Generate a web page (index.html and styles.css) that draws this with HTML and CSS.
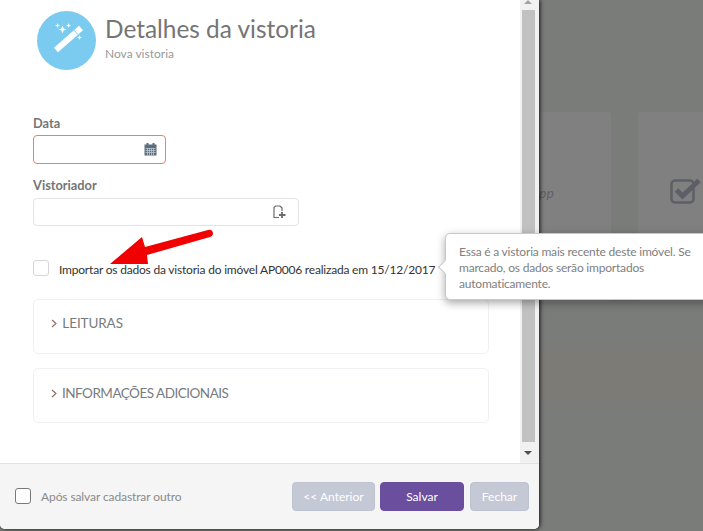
FILE: index.html
```html
<!DOCTYPE html>
<html lang="pt-BR">
<head>
    <meta charset="UTF-8">
    <meta name="viewport" content="width=device-width, initial-scale=1.0">
    <title>Detalhes da vistoria</title>
    <link rel="stylesheet" href="styles.css">
</head>
<body>
    <main class="page">
        <section class="panel">
            <div class="panel-body">
                <div class="content">
                    <header class="head">
                        <div class="head-icon">
                            <svg width="44" height="44" viewBox="0 0 44 44">
                                <path d="M9 28.750 L34 6.750 L38 11.250 L13 33.250 Z" fill="#fff"/>
                                <path d="M29 11.150 L33 15.650" stroke="#7bcbf0" stroke-width="1"/>
                                <path d="M17.500 6.500 L18.600 9.400 L21.500 10.500 L18.600 11.600 L17.500 14.500 L16.400 11.600 L13.500 10.500 L16.400 9.400 Z" fill="#fff"/>
                                <path d="M12.500 4 L13.200 5.800 L15 6.500 L13.200 7.200 L12.500 9 L11.800 7.200 L10 6.500 L11.800 5.800 Z" fill="#fff"/>
                                <path d="M23.500 4 L24.200 5.800 L26 6.500 L24.200 7.200 L23.500 9 L22.800 7.200 L21 6.500 L22.800 5.800 Z" fill="#fff"/>
                                <path d="M34.500 16 L35.200 17.800 L37 18.500 L35.200 19.200 L34.500 21 L33.800 19.200 L32 18.500 L33.800 17.800 Z" fill="#fff"/>
                            </svg>
                        </div>
                        <div>
                            <h1>Detalhes da vistoria</h1>
                            <p class="subtitle">Nova vistoria</p>
                        </div>
                    </header>

                    <label class="field-label">Data</label>
                    <div class="input input-date input-error">
                        <svg width="13" height="13" viewBox="0 0 13 13">
                            <rect x="0.500" y="1.500" width="12" height="11" fill="#5d6d7c"/>
                            <rect x="2.500" y="0" width="2" height="3" fill="#5d6d7c"/>
                            <rect x="8.500" y="0" width="2" height="3" fill="#5d6d7c"/>
                            <path d="M1.500 5.500H11.500M1.500 7.500H11.500M1.500 9.500H11.500M3.500 5V12M5.500 5V12M7.500 5V12M9.500 5V12" stroke="#b9c7d3" stroke-width="0.800"/>
                        </svg>
                    </div>

                    <label class="field-label field-label-second">Vistoriador</label>
                    <div class="input input-wide">
                        <svg width="13" height="14" viewBox="0 0 13 14">
                            <path d="M7 1H2.500L1 2.500V12.500H6" fill="none" stroke="#6b6b6b" stroke-width="1.200"/>
                            <path d="M7 1L9 3V6" fill="none" stroke="#6b6b6b" stroke-width="1.200"/>
                            <path d="M9 7V13M6 10H12.500" fill="none" stroke="#6b6b6b" stroke-width="1.800"/>
                        </svg>
                    </div>

                    <div class="import-row">
                        <span class="check"></span>
                        <span class="import-text">Importar os dados da vistoria do imóvel AP0006 realizada em 15/12/2017</span>
                    </div>

                    <div class="accordion">
                        <svg class="chevron" width="6" height="9" viewBox="0 0 6 9">
                            <path d="M1 1 L5 4.500 L1 8" fill="none" stroke="#8a6a5e" stroke-width="1.100"/>
                        </svg>
                        LEITURAS
                    </div>
                    <div class="accordion accordion-second">
                        <svg class="chevron" width="6" height="9" viewBox="0 0 6 9">
                            <path d="M1 1 L5 4.500 L1 8" fill="none" stroke="#8a6a5e" stroke-width="1.100"/>
                        </svg>
                        INFORMAÇÕES ADICIONAIS
                    </div>
                </div>

                <div class="scrollbar">
                    <span class="arrow-up"></span>
                    <div class="thumb"></div>
                    <span class="arrow-down"></span>
                </div>
            </div>

            <footer class="foot">
                <span class="check check-dark"></span>
                <span class="foot-text">Após salvar cadastrar outro</span>
                <button class="btn btn-prev">&lt;&lt; Anterior</button>
                <button class="btn btn-save">Salvar</button>
                <button class="btn btn-close">Fechar</button>
            </footer>
        </section>

        <section class="backdrop">
            <div class="card card-app"><em>pp</em></div>
            <div class="card card-check">
                <svg width="32" height="27" viewBox="0 0 32 27">
                    <rect x="1.500" y="3.500" width="22" height="22" rx="3.500" fill="none" stroke="#5d5f66" stroke-width="2.500"/>
                    <path d="M6.500 13 L12.500 19 L29 3.500" fill="none" stroke="#5d5f66" stroke-width="5"/>
                </svg>
            </div>
            <div class="band"></div>
        </section>

        <!-- red arrow drawn on top of the screenshot -->
        <svg class="red-arrow" width="110" height="50" viewBox="0 0 110 50">
            <path d="M1 38 L33 11 L36 21 L99 4 Q103 3 104 7 Q104 10 101 11 L38 29 L39 38 Z" fill="#f00000"/>
        </svg>

        <div class="tooltip">
            <span class="tooltip-arrow"></span>
            Essa é a vistoria mais recente deste imóvel. Se marcado, os dados serão importados automaticamente.
        </div>
    </main>
</body>
</html>
```

FILE: styles.css
```css
* {
    margin: 0;
    padding: 0;
    box-sizing: border-box;
}

body {
    font-family: Lato, "Open Sans", sans-serif;
    background-color: #7a7c7a;
    overflow: hidden;
}

.page {
    position: relative;
    display: flex;
    width: 703px;
    height: 531px;
    overflow: hidden;
}

.panel {
    display: flex;
    flex-direction: column;
    flex: 0 0 539px;
    height: 529px;
    background: #fff;
    border-radius: 0 0 5px 5px;
    box-shadow: 1px 0 4px rgba(0, 0, 0, 0.85);
    position: relative;
    z-index: 1;
}

.panel-body {
    display: flex;
    flex: 1;
    min-height: 0;
}

.content {
    flex: 1;
    padding: 0 31px 0 33px;
    overflow: hidden;
}

.head {
    display: flex;
    height: 115px;
    padding: 11px 0 0 4px;
    gap: 9px;
}

.head-icon {
    display: flex;
    align-items: center;
    justify-content: center;
    width: 59px;
    height: 59px;
    border-radius: 50%;
    background: #7bcbf0;
}

h1 {
    font-size: 24.400px;
    font-weight: 400;
    line-height: 30px;
    margin-top: 3px;
    color: #757575;
}

.subtitle {
    font-size: 12px;
    line-height: 16px;
    margin-top: 2px;
    color: #999;
}

.field-label {
    display: block;
    font-size: 12.800px;
    font-weight: 700;
    line-height: 16px;
    color: #757575;
}

.field-label-second {
    margin-top: 13px;
}

.input {
    display: flex;
    align-items: center;
    justify-content: flex-end;
    height: 28px;
    margin-top: 5px;
    border: 1px solid #e3e3e3;
    border-radius: 4px;
    background: #fff;
}

.input-date {
    width: 133px;
    height: 29px;
    margin-top: 4px;
    padding-right: 8px;
}

.input-error {
    border-color: #e8806c;
}

.input-wide {
    width: 266px;
    padding-right: 12px;
}

.import-row {
    display: flex;
    align-items: center;
    gap: 10px;
    height: 18px;
    margin-top: 33px;
}

.check {
    flex: none;
    width: 16px;
    height: 16px;
    border: 1px solid #d6d6d6;
    border-radius: 3px;
    background: #fff;
}

.import-text {
    font-size: 12px;
    letter-spacing: -0.200px;
    color: #333;
    white-space: nowrap;
    margin-top: 2px;
}

.accordion {
    height: 55px;
    margin-top: 22px;
    padding: 13px 0 0 17px;
    border: 1px solid #f0f1f4;
    border-radius: 5px;
    font-size: 13.500px;
    line-height: 20px;
    letter-spacing: -0.100px;
    color: #777b80;
}

.accordion-second {
    margin-top: 14px;
    padding-top: 14px;
    letter-spacing: -0.500px;
}

.chevron {
    margin-right: 2px;
}

.scrollbar {
    position: relative;
    flex: 0 0 19px;
    padding: 10px 4px 10px 2px;
    background: #f1f1f1;
}

.thumb {
    width: 13px;
    height: 432px;
    background: #c1c1c1;
}

.arrow-up,
.arrow-down {
    position: absolute;
    left: 4px;
    border-left: 4px solid transparent;
    border-right: 4px solid transparent;
}

.arrow-up {
    top: 0;
    border-bottom: 4px solid #a3a3a3;
}

.arrow-down {
    bottom: 8px;
    border-top: 4px solid #505050;
}

.foot {
    display: flex;
    align-items: center;
    flex: 0 0 66px;
    padding: 0 10px 0 15px;
    background: #f5f5f5;
    border-top: 1px solid #e2e2e2;
    border-radius: 0 0 5px 5px;
}

.check-dark {
    border-color: #77797c;
    margin-top: -1px;
}

.foot-text {
    flex: 1;
    margin-left: 10px;
    font-size: 12px;
    letter-spacing: -0.100px;
    color: #8a8a8a;
}

.btn {
    height: 29px;
    margin-left: 5px;
    border: 1px solid #bcc2cf;
    border-radius: 4px;
    font-family: inherit;
    font-size: 12px;
    color: #fff;
    background: #c5c9d5;
}

.btn-prev {
    width: 83px;
}

.btn-save {
    width: 84px;
    background: #6a4f9e;
    border-color: #6a4f9e;
}

.btn-close {
    width: 59px;
    margin-left: 6px;
}

.backdrop {
    position: relative;
    flex: 1;
    display: flex;
    gap: 27px;
    padding-top: 112px;
}

.card {
    flex: none;
    height: 190px;
    background: #7f807f;
    border-radius: 3px;
}

.card-app {
    width: 72px;
    padding-top: 72px;
    font-size: 14px;
    color: #5f6066;
    line-height: 18px;
}

.card-check {
    width: 90px;
    padding: 65px 0 0 32px;
}

.band {
    position: absolute;
    top: 350px;
    left: 0;
    right: 0;
    height: 52px;
    background: #7d7b76;
}

.red-arrow {
    position: absolute;
    left: 109px;
    top: 226px;
    z-index: 2;
}

.tooltip {
    position: absolute;
    z-index: 3;
    left: 445px;
    top: 233px;
    width: 270px;
    height: 67px;
    padding: 10px 14px 10px 13px;
    background: #fff;
    border: 1px solid #c8c8c8;
    border-radius: 5px;
    box-shadow: 0 3px 8px rgba(0, 0, 0, 0.35);
    font-size: 12px;
    letter-spacing: -0.200px;
    line-height: 16px;
    color: #808080;
}

.tooltip-arrow {
    position: absolute;
    left: -6px;
    top: 28px;
    width: 10px;
    height: 10px;
    background: #fff;
    border-left: 1px solid #c8c8c8;
    border-bottom: 1px solid #c8c8c8;
    transform: rotate(45deg);
}
```
